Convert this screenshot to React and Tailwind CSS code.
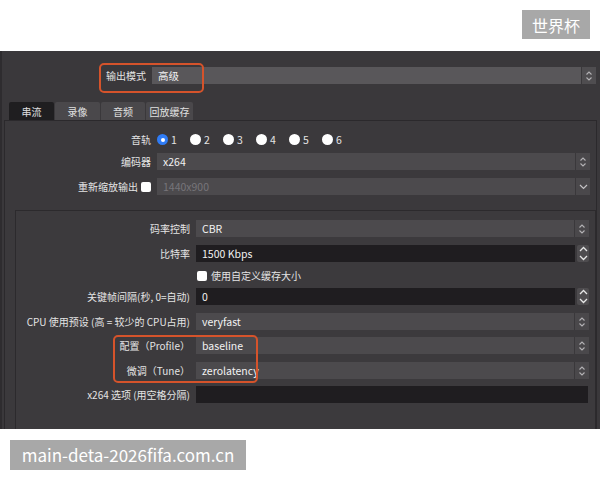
import React from "react";

const font = { fontFamily: '"Noto Sans CJK SC", "Noto Sans", sans-serif' };

// small up/down chevrons used by the combo boxes
const ComboArrows = () => (
  <svg width="8" height="12" viewBox="0 0 8 12" fill="none" stroke="#b4b2b5" strokeWidth="1.1">
    <path d="M1.5 4.5 L4 2 L6.5 4.5" />
    <path d="M1.5 7.5 L4 10 L6.5 7.5" />
  </svg>
);

const DownArrow = () => (
  <svg width="9" height="6" viewBox="0 0 9 6" fill="none" stroke="#c4c2c5" strokeWidth="1.2">
    <path d="M1 1 L4.5 4.5 L8 1" />
  </svg>
);

const Combo = ({ value, dim, dropdown, light }) => (
  <div className="flex flex-1 h-[17px]">
    <div
      className={`flex-1 flex items-center pl-[6px] text-[10.5px] ${
        light ? "bg-[#59575a]" : "bg-[#4c4a4d]"
      } ${dim ? "text-[#77757a]" : "text-[#f2f2f2]"}`}
    >
      {value}
    </div>
    <div
      className={`w-[15px] flex items-center justify-center border-l border-[#3a383b] ${
        light ? "bg-[#4f4d50]" : "bg-[#4a484b]"
      }`}
    >
      {dropdown ? <DownArrow /> : <ComboArrows />}
    </div>
  </div>
);

const Spin = ({ value }) => (
  <div className="flex flex-1 h-[17px]">
    <div className="flex-1 flex items-center pl-[6px] text-[10.5px] text-[#f2f2f2] bg-[#1f1d20]">{value}</div>
    <div className="ml-[2px] w-[12px] flex flex-col bg-[#4e4c4f] rounded-[2px]">
      <div className="h-1/2 flex items-center justify-center">
        <svg width="9" height="6" viewBox="0 0 9 6" fill="none" stroke="#e6e6e6" strokeWidth="1.3">
          <path d="M1 5 L4.5 1.5 L8 5" />
        </svg>
      </div>
      <div className="h-1/2 flex items-center justify-center">
        <svg width="9" height="6" viewBox="0 0 9 6" fill="none" stroke="#e6e6e6" strokeWidth="1.3">
          <path d="M1 1 L4.5 4.5 L8 1" />
        </svg>
      </div>
    </div>
  </div>
);

const Row = ({ label, labelW, mt, children }) => (
  <div className="flex items-center h-[17px] pr-[6px]" style={{ marginTop: mt }}>
    <div className="flex justify-end items-center text-[10px] text-[#e4e4e4] whitespace-nowrap" style={{ width: labelW }}>
      {label}
    </div>
    <div className="flex flex-1 ml-[6px]">{children}</div>
  </div>
);

const Checkbox = () => <div className="w-[10px] h-[10px] rounded-[2px] bg-white" />;

export default function App() {
  const tabs = [
    { name: "串流", w: "w-[45px]", active: true },
    { name: "录像", w: "w-[45px]" },
    { name: "音频", w: "w-[44px]" },
    { name: "回放缓存", w: "w-[47px]" },
  ];

  return (
    <div className="relative w-[600px] h-[480px] bg-white overflow-hidden" style={font}>
      {/* header with tag */}
      <div className="h-[51px] flex justify-end items-start pt-[10px] pr-[10px]">
        <div className="w-[68px] h-[29px] bg-[#a8a8a8] text-white text-[16px] flex items-center justify-center">
          世界杯
        </div>
      </div>

      {/* settings window */}
      <div className="h-[378px] bg-[#3a383b] overflow-hidden border-l-[2px] border-[#2e2c2f]">
        <div className="flex items-center h-[17px] mt-[16px] pr-[4px]">
          <div className="w-[144px] text-right text-[10px] text-[#e4e4e4]">输出模式</div>
          <div className="flex flex-1 ml-[6px]">
            <Combo value="高级" light />
          </div>
        </div>

        {/* tabs */}
        <div className="flex gap-[1px] mt-[18px] ml-[7px] h-[18px]">
          {tabs.map((t) => (
            <div
              key={t.name}
              className={`${t.w} flex items-center justify-center text-[10px] text-[#e0e0e0] rounded-t-[2px] ${
                t.active ? "bg-[#1f1e20]" : "bg-[#4a484b]"
              }`}
            >
              {t.name}
            </div>
          ))}
        </div>

        {/* tab pane */}
        <div className="ml-[2px] mr-[3px] h-[320px] border-t-[1px] border-l border-r border-[#2b292c] bg-[#3b393c]">
          <div className="flex items-center h-[17px] mt-[10px]">
            <div className="w-[146px] text-right text-[10px] text-[#e4e4e4]">音轨</div>
            <div className="flex ml-[6px] text-[10.5px] text-[#e4e4e4]">
              {[1, 2, 3, 4, 5, 6].map((n) => (
                <div key={n} className="w-[33px] flex items-center">
                  {n === 1 ? (
                    <div className="w-[11px] h-[11px] rounded-full bg-[#2f7cf6] flex items-center justify-center">
                      <div className="w-[4px] h-[4px] rounded-full bg-white" />
                    </div>
                  ) : (
                    <div className="w-[11px] h-[11px] rounded-full bg-white" />
                  )}
                  <span className="ml-[3px]">{n}</span>
                </div>
              ))}
            </div>
          </div>

          <Row label="编码器" labelW={146} mt={5}>
            <Combo value="x264" />
          </Row>
          <Row
            label={
              <>
                <span>重新缩放输出</span>
                <span className="ml-[3px]">
                  <Checkbox />
                </span>
              </>
            }
            labelW={146}
            mt={8}
          >
            <Combo value="1440x900" dim dropdown />
          </Row>

          {/* group box */}
          <div className="ml-[10px] mt-[15px] h-[240px] border border-[#2c2a2d] bg-[#3c3a3d]">
            <Row label="码率控制" labelW={174} mt={9}>
              <Combo value="CBR" />
            </Row>
            <Row label="比特率" labelW={174} mt={8}>
              <Spin value="1500 Kbps" />
            </Row>
            <div className="flex items-center h-[17px] mt-[5px] ml-[181px] text-[10px] text-[#e4e4e4]">
              <Checkbox />
              <span className="ml-[4px]">使用自定义缓存大小</span>
            </div>
            <Row label="关键帧间隔(秒, 0=自动)" labelW={174} mt={4}>
              <Spin value="0" />
            </Row>
            <Row label="CPU 使用预设 (高 = 较少的 CPU占用)" labelW={174} mt={8}>
              <Combo value="veryfast" />
            </Row>
            <Row label="配置（Profile）" labelW={174} mt={7}>
              <Combo value="baseline" />
            </Row>
            <Row label="微调（Tune）" labelW={174} mt={8}>
              <Combo value="zerolatency" />
            </Row>
            <Row label="x264 选项 (用空格分隔)" labelW={174} mt={7}>
              <div className="flex-1 h-[17px] bg-[#1f1d20] mr-[1px]" />
            </Row>
          </div>
        </div>
      </div>

      {/* watermark */}
      <div className="mt-[11px] ml-[10px] w-[236px] h-[30px] bg-[#a8a8a8] text-white text-[17px] flex items-center justify-center">
        main-deta-2026fifa.com.cn
      </div>

      {/* highlight annotations */}
      <div className="absolute left-[99px] top-[63px] w-[105px] h-[30px] border-2 border-[#d5532b] rounded-[5px]" />
      <div className="absolute left-[113px] top-[335px] w-[145px] h-[48px] border-2 border-[#d5532b] rounded-[5px]" />
    </div>
  );
}
